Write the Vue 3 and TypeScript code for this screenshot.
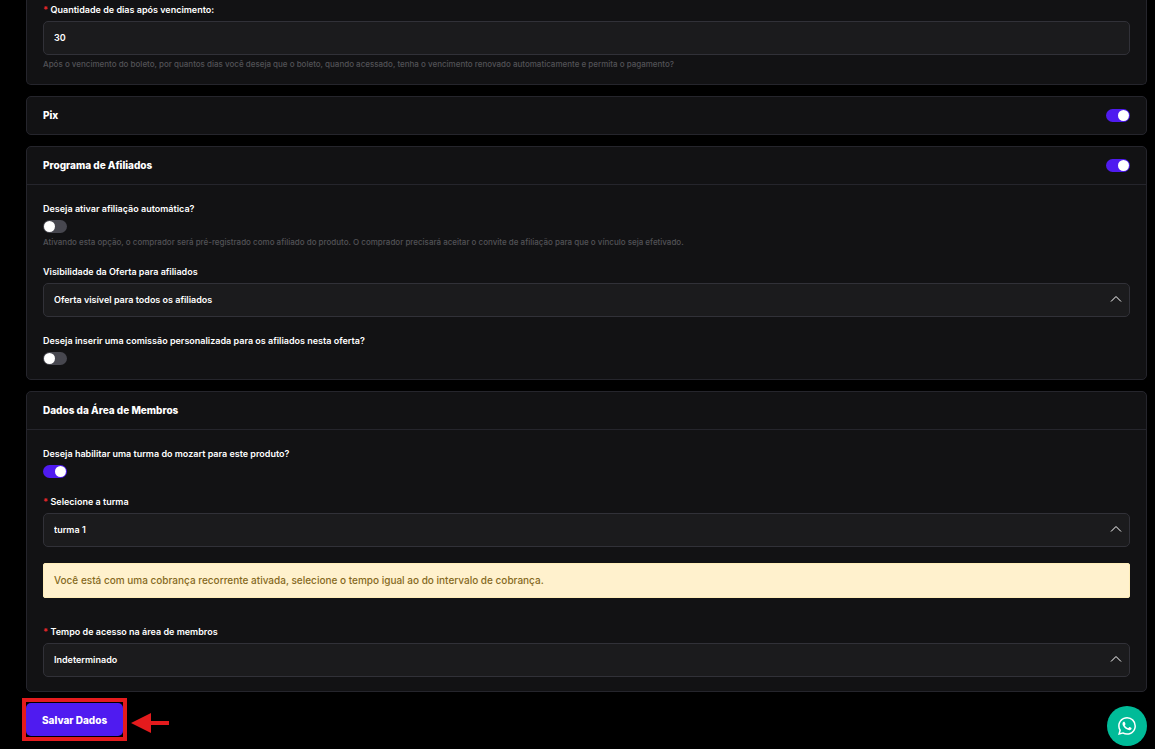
<script setup lang="ts">
import { ref } from 'vue'

const dias = ref('30')
const pix = ref(true)
const afiliados = ref(true)
const afiliacaoAutomatica = ref(false)
const comissaoPersonalizada = ref(false)
const turmaMozart = ref(true)
const visibilidade = ref('todos')
const turma = ref('turma-1')
const tempo = ref('indeterminado')
</script>

<template>
  <main class="page">
    <form class="form" @submit.prevent>
      <section class="card card-continued">
        <div class="body">
          <div class="field">
            <label class="label" for="dias"><span class="req">*</span> Quantidade de dias após vencimento:</label>
            <input id="dias" v-model="dias" class="control" type="text" />
            <p class="help">Após o vencimento do boleto, por quantos dias você deseja que o boleto, quando acessado, tenha o vencimento renovado automaticamente e permita o pagamento?</p>
          </div>
        </div>
      </section>

      <section class="card">
        <header class="head">
          <h2><label for="pix">Pix</label></h2>
          <input id="pix" v-model="pix" class="switch" type="checkbox" />
        </header>
      </section>

      <section class="card">
        <header class="head divided">
          <h2><label for="afiliados">Programa de Afiliados</label></h2>
          <input id="afiliados" v-model="afiliados" class="switch" type="checkbox" />
        </header>
        <div class="body">
          <div class="field">
            <label class="label" for="auto">Deseja ativar afiliação automática?</label>
            <input id="auto" v-model="afiliacaoAutomatica" class="switch" type="checkbox" />
            <p class="help">Ativando esta opção, o comprador será pré-registrado como afiliado do produto. O comprador precisará aceitar o convite de afiliação para que o vínculo seja efetivado.</p>
          </div>
          <div class="field">
            <label class="label" for="visibilidade">Visibilidade da Oferta para afiliados</label>
            <div class="select">
              <select id="visibilidade" v-model="visibilidade" class="control">
                <option value="todos">Oferta visível para todos os afiliados</option>
              </select>
              <svg class="chevron" viewBox="0 0 12 8" aria-hidden="true"><path d="M1 6.5 6 1.5l5 5" /></svg>
            </div>
          </div>
          <div class="field">
            <label class="label" for="comissao">Deseja inserir uma comissão personalizada para os afiliados nesta oferta?</label>
            <input id="comissao" v-model="comissaoPersonalizada" class="switch" type="checkbox" />
          </div>
        </div>
      </section>

      <section class="card">
        <header class="head divided">
          <h2>Dados da Área de Membros</h2>
        </header>
        <div class="body">
          <div class="field">
            <label class="label" for="mozart">Deseja habilitar uma turma do mozart para este produto?</label>
            <input id="mozart" v-model="turmaMozart" class="switch" type="checkbox" />
          </div>
          <div class="field">
            <label class="label" for="turma"><span class="req">*</span> Selecione a turma</label>
            <div class="select">
              <select id="turma" v-model="turma" class="control">
                <option value="turma-1">turma 1</option>
              </select>
              <svg class="chevron" viewBox="0 0 12 8" aria-hidden="true"><path d="M1 6.5 6 1.5l5 5" /></svg>
            </div>
          </div>
          <p class="alert" role="alert">Você está com uma cobrança recorrente ativada, selecione o tempo igual ao do intervalo de cobrança.</p>
          <div class="field">
            <label class="label" for="tempo"><span class="req">*</span> Tempo de acesso na área de membros</label>
            <div class="select">
              <select id="tempo" v-model="tempo" class="control">
                <option value="indeterminado">Indeterminado</option>
              </select>
              <svg class="chevron" viewBox="0 0 12 8" aria-hidden="true"><path d="M1 6.5 6 1.5l5 5" /></svg>
            </div>
          </div>
        </div>
      </section>

      <div class="actions">
        <button class="save" type="submit">Salvar Dados</button>
        <span class="highlight" aria-hidden="true"></span>
        <svg class="arrow" viewBox="0 0 38 20" aria-hidden="true"><path d="M0 10 20 0v8h18v4H20v8z" /></svg>
      </div>
    </form>

    <a class="whatsapp" href="#" aria-label="WhatsApp">
      <svg viewBox="0 0 24 24" aria-hidden="true">
        <path d="M17.472 14.382c-.297-.149-1.758-.867-2.03-.967-.273-.099-.471-.148-.67.15-.197.297-.767.966-.94 1.164-.173.199-.347.223-.644.075-.297-.15-1.255-.463-2.39-1.475-.883-.788-1.48-1.761-1.653-2.059-.173-.297-.018-.458.13-.606.134-.133.298-.347.446-.52.149-.174.198-.298.298-.497.099-.198.05-.371-.025-.52-.075-.149-.669-1.612-.916-2.207-.242-.579-.487-.5-.669-.51-.173-.008-.371-.01-.57-.01-.198 0-.52.074-.792.372-.272.297-1.04 1.016-1.04 2.479 0 1.462 1.065 2.875 1.213 3.074.149.198 2.096 3.2 5.077 4.487.709.306 1.262.489 1.694.625.712.227 1.36.195 1.871.118.571-.085 1.758-.719 2.006-1.413.248-.694.248-1.289.173-1.413-.074-.124-.272-.198-.57-.347m-5.421 7.403h-.004a9.87 9.87 0 01-5.031-1.378l-.361-.214-3.741.982.998-3.648-.235-.374a9.86 9.86 0 01-1.51-5.26c.001-5.45 4.436-9.884 9.888-9.884 2.64 0 5.122 1.03 6.988 2.898a9.825 9.825 0 012.893 6.994c-.003 5.45-4.437 9.884-9.885 9.884m8.413-18.297A11.815 11.815 0 0012.05 0C5.495 0 .16 5.335.157 11.892c0 2.096.547 4.142 1.588 5.945L.057 24l6.305-1.654a11.882 11.882 0 005.683 1.448h.005c6.554 0 11.89-5.335 11.893-11.893a11.821 11.821 0 00-3.48-8.413z" />
      </svg>
    </a>
  </main>
</template>

<style>
html,
body {
  background: #000;
}
</style>

<style scoped>
.page {
  padding: 0 8px 12px 26px;
  font-family: Inter, 'Liberation Sans', sans-serif;
  font-size: 9px;
  color: #fff;
}
.form {
  display: flex;
  flex-direction: column;
  gap: 11px;
}
.card {
  background: #121214;
  border: 1px solid #25252c;
  border-radius: 5px;
}
.card-continued {
  border-top: 0;
  border-radius: 0 0 5px 5px;
}
.card-continued .body {
  padding-top: 2px;
}
.head {
  display: flex;
  align-items: center;
  justify-content: space-between;
  height: 37px;
  padding: 0 16px;
}
.divided {
  border-bottom: 1px solid #25252c;
}
h2 {
  margin: 0;
  padding-bottom: 2px;
  font-size: 10px;
  line-height: 16px;
  font-weight: 800;
}
.body {
  display: flex;
  flex-direction: column;
  gap: 16px;
  padding: 16px 16px 14px;
}
.field {
  display: flex;
  flex-direction: column;
  align-items: flex-start;
  gap: 3px;
}
.label {
  line-height: 16px;
  font-weight: 600;
}
.req {
  color: #e5262b;
  font-weight: 800;
}
.control {
  display: block;
  box-sizing: border-box;
  width: 100%;
  height: 34px;
  margin: 0;
  padding: 0 10px 2px;
  appearance: none;
  background: #1b1b1d;
  border: 1px solid #313138;
  border-radius: 5px;
  color: #fff;
  font: inherit;
  font-weight: 600;
}
.select {
  position: relative;
  width: 100%;
}
.chevron {
  position: absolute;
  top: 12px;
  right: 8px;
  width: 12px;
  height: 8px;
  fill: none;
  stroke: #fff;
  stroke-width: 1;
  pointer-events: none;
}
.help {
  margin: 0;
  font-size: 8px;
  line-height: 12px;
  font-weight: 500;
  color: #535357;
}
.switch {
  appearance: none;
  display: flex;
  align-items: center;
  width: 24px;
  height: 13px;
  margin: 0;
  padding: 0 1px;
  box-sizing: border-box;
  border-radius: 7px;
  background: #47474f;
}
.switch::before {
  content: '';
  width: 11px;
  height: 11px;
  border-radius: 50%;
  background: #fff;
}
.switch:checked {
  justify-content: flex-end;
  background: #4f1bf0;
}
.alert {
  margin: 0 0 10px;
  padding: 9px 10px;
  border: 1px solid #ffeeba;
  border-radius: 2px;
  background: #fff1cd;
  color: #85691d;
  font-size: 10px;
  line-height: 15px;
  font-weight: 500;
}
.actions {
  position: relative;
  align-self: flex-start;
}
.save {
  display: block;
  height: 33px;
  padding: 0 16px;
  border: 0;
  border-radius: 5px;
  background: #4f1bf0;
  color: #fff;
  font: inherit;
  font-size: 10px;
  font-weight: 800;
}
.highlight {
  position: absolute;
  inset: -5px -4px;
  border: 4px solid #e41b1d;
  pointer-events: none;
}
.arrow {
  position: absolute;
  top: 10px;
  left: calc(100% + 8px);
  width: 38px;
  height: 20px;
  fill: #e41b1d;
}
.whatsapp {
  position: fixed;
  right: 8px;
  bottom: 3px;
  display: flex;
  align-items: center;
  justify-content: center;
  width: 40px;
  height: 40px;
  border-radius: 50%;
  background: #00bb98;
}
.whatsapp svg {
  width: 18px;
  height: 18px;
  fill: #fff;
}
</style>
